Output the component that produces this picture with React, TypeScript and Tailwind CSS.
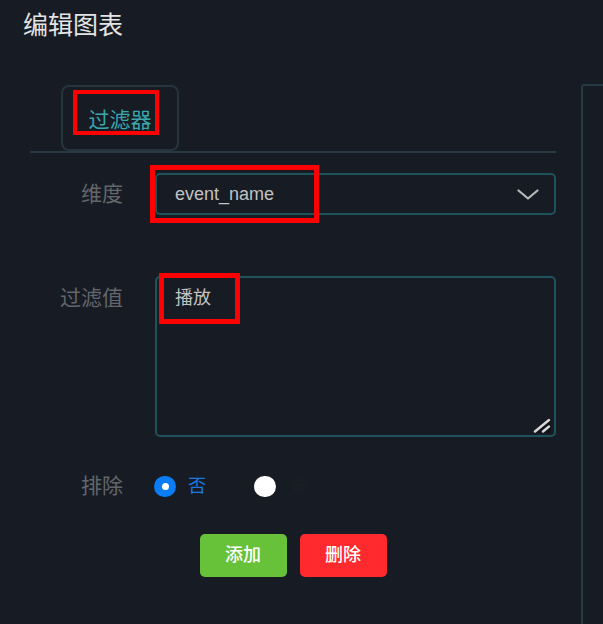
const font = "font-['Liberation_Sans','Noto_Sans_CJK_SC',sans-serif]";

const Mark = ({ className }: { className: string }) => (
  <div className={`absolute border-[#ff0000] pointer-events-none ${className}`} />
);

export default function App() {
  return (
    <div className={`w-[603px] h-[624px] bg-[#171c24] overflow-hidden ${font}`}>
      {/* Header */}
      <h1 className="h-[84px] pl-[23px] pt-[9px] text-[25px] leading-[32px] font-normal text-[#e4e4e4]">
        编辑图表
      </h1>

      <div className="flex h-[540px]">
        {/* Left: form */}
        <div className="w-[556px] shrink-0 pl-[30px]">
          {/* Tabs */}
          <div className="h-[67px] pt-[1px] pl-[31px]">
            <div className="relative w-[118px] h-[66px] border-2 border-[#26343e] rounded-[8px] flex items-center justify-center pt-[3px] text-[21px] text-[#3aa6ad]">
              过滤器
              <Mark className="left-[10px] top-[3px] w-[86px] h-[45px] border-[4px]" />
            </div>
          </div>
          <div className="h-[2px] bg-[#273943]" />

          {/* 维度 */}
          <div className="flex items-center mt-[20px]">
            <label className="w-[93px] text-right text-[21px] text-[#63666b]">维度</label>
            <div className="relative ml-[32px] flex-1 h-[42px] border-2 border-[#1f525b] rounded-[5px] flex items-center justify-between pl-[18px] pr-[15px]">
              <span className="text-[18px] text-[#c2c2c2]">event_name</span>
              <svg width="22" height="11" viewBox="0 0 22 11" fill="none">
                <path d="M1.5 1.5 L11 9.5 L20.5 1.5" stroke="#b8b8b8" strokeWidth="2.2" strokeLinecap="round" strokeLinejoin="round" />
              </svg>
              <Mark className="-left-[7px] -top-[10px] w-[169px] h-[58px] border-[5px]" />
            </div>
          </div>

          {/* 过滤值 */}
          <div className="flex items-start mt-[61px]">
            <label className="w-[93px] pt-[10px] text-right text-[21px] leading-[24px] text-[#63666b]">过滤值</label>
            <div className="relative ml-[32px] flex-1 h-[161px] border-2 border-[#1f525b] rounded-[5px]">
              <textarea
                readOnly
                value="播放"
                className="w-full h-full resize-none bg-transparent outline-none pl-[18px] pt-[8px] text-[18px] leading-[24px] text-[#c2c2c2]"
              />
              <svg className="absolute right-[3px] bottom-[2px]" width="18" height="15" viewBox="0 0 18 15">
                <path d="M0 15 L18 0 L18 15 Z" fill="#10141a" />
                <path d="M2 13.5 L16 2" stroke="#d8d8d8" strokeWidth="2.4" strokeLinecap="round" />
                <path d="M10 13.5 L16 8.5" stroke="#d8d8d8" strokeWidth="2.4" strokeLinecap="round" />
              </svg>
              <Mark className="left-[2px] -top-[5px] w-[81px] h-[51px] border-[5px]" />
            </div>
          </div>

          {/* 排除 */}
          <div className="flex items-center h-[24px] mt-[37px]">
            <label className="w-[93px] text-right text-[21px] text-[#63666b]">排除</label>
            <div className="ml-[31px] flex items-center">
              <span className="w-[22px] h-[21px] rounded-full bg-[#0a7df5] flex items-center justify-center">
                <span className="w-[7px] h-[7px] rounded-full bg-white" />
              </span>
              <span className="ml-[12px] text-[18px] text-[#1a78e0]">否</span>
              <span className="ml-[48px] w-[22px] h-[21px] rounded-full bg-white" />
              <span className="ml-[15px] text-[16px] text-[#1b1f25]">是</span>
            </div>
          </div>

          {/* Buttons */}
          <div className="flex justify-center gap-[13px] mt-[36px]">
            <button className="w-[87px] h-[43px] rounded-[5px] bg-[#67c23a] text-white text-[18px] font-medium">
              添加
            </button>
            <button className="w-[87px] h-[43px] rounded-[5px] bg-[#ff2a2e] text-white text-[18px] font-medium">
              删除
            </button>
          </div>
        </div>

        {/* Right panel edge */}
        <div className="ml-[25px] flex-1 border-l-2 border-t-2 border-[#253944] rounded-tl-[3px]" />
      </div>
    </div>
  );
}
